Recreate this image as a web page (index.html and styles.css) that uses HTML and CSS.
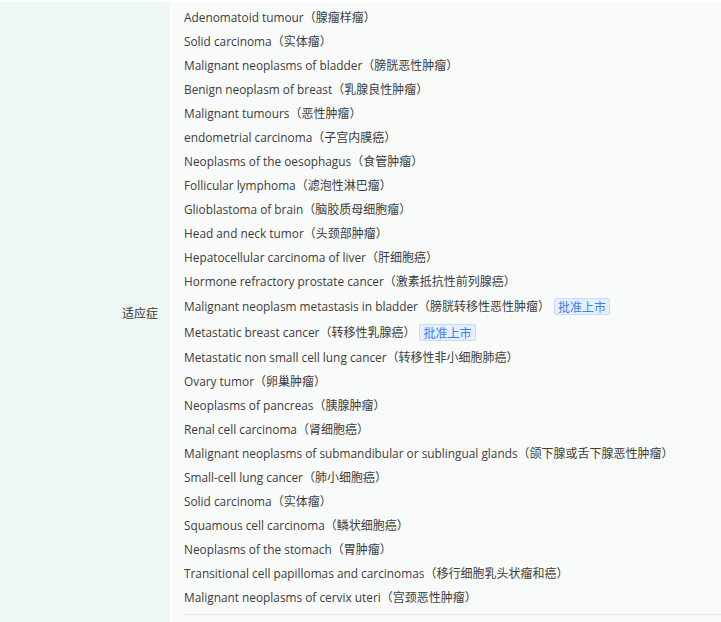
FILE: index.html
```html
<!DOCTYPE html>
<html>
<head>
<meta charset="utf-8">
<link rel="stylesheet" href="styles.css">
</head>
<body>
<div class="row">
  <div class="label"><span>适应症</span></div>
  <div class="content">
    <ul class="list">
      <li>Adenomatoid tumour<span class="zh">（腺瘤样瘤）</span></li>
      <li>Solid carcinoma<span class="zh">（实体瘤）</span></li>
      <li>Malignant neoplasms of bladder<span class="zh">（膀胱恶性肿瘤）</span></li>
      <li>Benign neoplasm of breast<span class="zh">（乳腺良性肿瘤）</span></li>
      <li>Malignant tumours<span class="zh">（恶性肿瘤）</span></li>
      <li>endometrial carcinoma<span class="zh">（子宫内膜癌）</span></li>
      <li>Neoplasms of the oesophagus<span class="zh">（食管肿瘤）</span></li>
      <li>Follicular lymphoma<span class="zh">（滤泡性淋巴瘤）</span></li>
      <li>Glioblastoma of brain<span class="zh">（脑胶质母细胞瘤）</span></li>
      <li>Head and neck tumor<span class="zh">（头颈部肿瘤）</span></li>
      <li>Hepatocellular carcinoma of liver<span class="zh">（肝细胞癌）</span></li>
      <li>Hormone refractory prostate cancer<span class="zh">（激素抵抗性前列腺癌）</span></li>
      <li class="tagged">Malignant neoplasm metastasis in bladder<span class="zh">（膀胱转移性恶性肿瘤）</span><span class="tag">批准上市</span></li>
      <li class="tagged">Metastatic breast cancer<span class="zh">（转移性乳腺癌）</span><span class="tag">批准上市</span></li>
      <li>Metastatic non small cell lung cancer<span class="zh">（转移性非小细胞肺癌）</span></li>
      <li>Ovary tumor<span class="zh">（卵巢肿瘤）</span></li>
      <li>Neoplasms of pancreas<span class="zh">（胰腺肿瘤）</span></li>
      <li>Renal cell carcinoma<span class="zh">（肾细胞癌）</span></li>
      <li>Malignant neoplasms of submandibular or sublingual glands<span class="zh">（颌下腺或舌下腺恶性肿瘤）</span></li>
      <li>Small-cell lung cancer<span class="zh">（肺小细胞癌）</span></li>
      <li>Solid carcinoma<span class="zh">（实体瘤）</span></li>
      <li>Squamous cell carcinoma<span class="zh">（鳞状细胞癌）</span></li>
      <li>Neoplasms of the stomach<span class="zh">（胃肿瘤）</span></li>
      <li>Transitional cell papillomas and carcinomas<span class="zh">（移行细胞乳头状瘤和癌）</span></li>
      <li>Malignant neoplasms of cervix uteri<span class="zh">（宫颈恶性肿瘤）</span></li>
    </ul>
  </div>
</div>
</body>
</html>
```

FILE: styles.css
```css
html, body {
  margin: 0;
  padding: 0;
  background: #ffffff;
}
body {
  font-family: "Open Sans", "Noto Sans CJK SC", sans-serif;
  font-size: 12px;
  color: #3c3c3c;
  padding-top: 2px;
}
.row {
  display: flex;
  gap: 2px;
  height: 620px;
}
.label {
  width: 170px;
  flex: none;
  background: #eef6f6;
  display: flex;
  align-items: center;
  justify-content: flex-end;
  padding-right: 12px;
  box-sizing: border-box;
  font-size: 12px;
  color: #333333;
  font-family: "Noto Sans CJK SC", sans-serif;
}
.content {
  flex: 1;
  background: #f9fbfb;
  padding: 3px 0 0 12px;
}
.list {
  list-style: none;
  margin: 0;
  padding: 0 0 5px 0;
  border-bottom: 1px solid #e6e8e8;
}
.list li {
  height: 24px;
  line-height: 24px;
  white-space: nowrap;
  font-size: 11.85px;
}
.zh {
  font-family: "Noto Sans CJK SC", sans-serif;
  font-size: 12px;
}
.list li.tagged {
  height: 26px;
  line-height: 26px;
  display: flex;
  align-items: center;
}
.tag {
  display: inline-block;
  margin-left: 4px;
  font-family: "Noto Sans CJK SC", sans-serif;
  font-size: 12px;
  line-height: 15px;
  padding: 0 3px;
  color: #3d7ef2;
  background: #e6efff;
  border: 1px solid #c8dbfb;
  border-radius: 2px;
}
```
